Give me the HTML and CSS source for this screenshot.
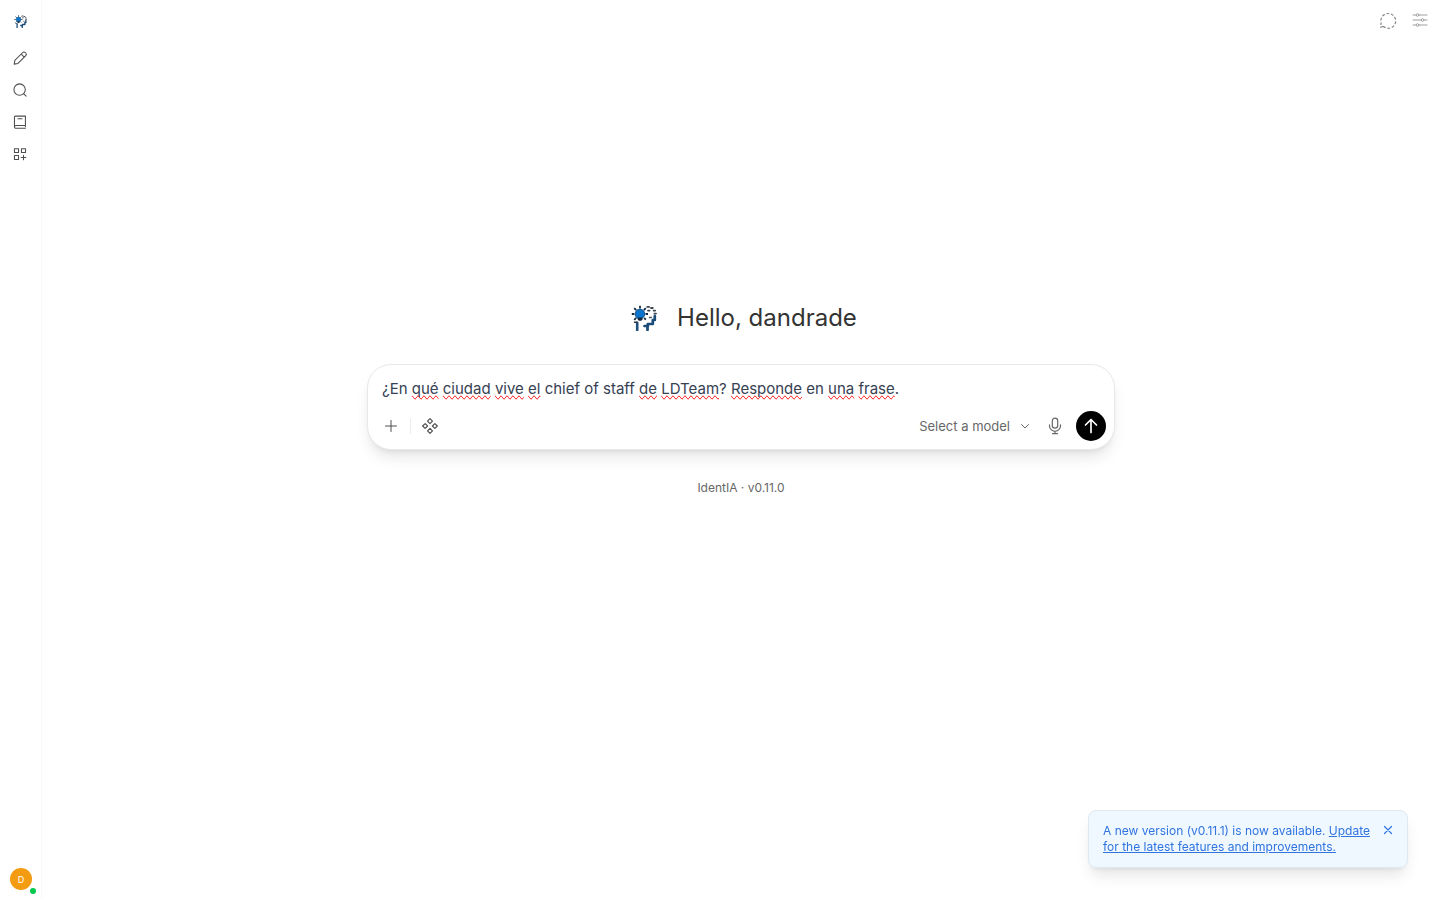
FILE: index.html
```html
<!DOCTYPE html>
<html lang="en">
<head>
<meta charset="utf-8">
<meta name="viewport" content="width=device-width, initial-scale=1">
<title>IdentIA</title>
<link rel="stylesheet" href="styles.css">
</head>
<body>
<svg class="defs" aria-hidden="true">
  <symbol id="logo" viewBox="0 0 26 26">
    <g stroke="#12283f" stroke-width="1.8" fill="none" stroke-linecap="butt">
      <path d="M9 .8v2.600M3.200 3.200l2 2M14.800 3.200l-2 2M.8 9h2.600M14.600 9h2.400M3.200 14.800l2-2M13.200 13l1.600 1.600"/>
    </g>
    <circle cx="9" cy="9" r="4.800" fill="#0b74cc" stroke="#12508a" stroke-width="1"/>
    <path d="M6.800 12.600h4.600v2l-1 1.200H7.800l-1-1.200z" fill="#12283f"/>
    <path d="M6.200 17.800v7.200" stroke="#1d4f7c" stroke-width="2.600"/>
    <path d="M3.500 17.200h2.500" stroke="#26323f" stroke-width="1.400"/>
    <path d="M16.300 1.900h1.800M20 3h1.800M22.600 5.600h1.600M17 5.600h1.600M23.400 8.600h1.600" stroke="#3a4550" stroke-width="1.800"/>
    <path d="M23.800 11v4h-2v4h-5v2.500M13.500 21h3v4" fill="none" stroke="#1b4b78" stroke-width="2.700"/>
    <path d="M18.500 12.500h2" stroke="#4a5560" stroke-width="1.400"/>
  </symbol>
</svg>
<div class="app">
  <nav class="sidebar" aria-label="Main">
    <div class="side-top">
      <button class="side-btn side-logo" aria-label="Open sidebar"><svg class="logo-small"><use href="#logo"/></svg></button>
      <button class="side-btn" aria-label="New chat"><svg class="icon" viewBox="0 0 24 24"><path d="M2 22.500l1.200-6.500L16.200 3a3.300 3.300 0 0 1 5.300 5.300L8.500 21.300zM14 5.200l5.300 5.300"/></svg></button>
      <button class="side-btn" aria-label="Search"><svg class="icon" viewBox="0 0 24 24"><circle cx="11.300" cy="11.300" r="9.800"/><path d="m18.500 18.500 4 4"/></svg></button>
      <button class="side-btn" aria-label="Notes"><svg class="icon" viewBox="0 0 24 24"><path d="M2.500 20V3.500a1.600 1.600 0 0 1 1.600-1.600h17.200V18H5a2.500 2.500 0 0 0-2.500 2.300Zm0 0A2.600 2.600 0 0 0 5.100 22.800h16.200M21.300 18v2M8.500 6.500h7"/></svg></button>
      <button class="side-btn" aria-label="Workspace"><svg class="icon" viewBox="0 0 24 24"><path d="M2.500 3H9.500v6.500H2.500zM14.500 3h7v6.500h-7zM2.500 14.500h7v7h-7zM18 14v8M14 18h8"/></svg></button>
    </div>
    <button class="avatar" aria-label="User menu">D<span class="online"></span></button>
  </nav>
  <main class="main">
    <header class="topbar">
      <button class="top-btn" aria-label="Temporary chat"><svg class="top-icon dashed" viewBox="0 0 16 16"><path d="M3.200 14.300a7.400 7.400 0 1 0-2.100-3.500L.7 15.200z"/></svg></button>
      <button class="top-btn" aria-label="Controls"><svg class="top-icon" viewBox="0 0 16 16"><path d="M1 3h3m3 0h8M1 8h8m3 0h3M1 13h3m3 0h8"/><circle cx="5.500" cy="3" r="1.300"/><circle cx="10.500" cy="8" r="1.300"/><circle cx="5.500" cy="13" r="1.300"/></svg></button>
    </header>
    <section class="hero">
      <div class="greeting">
        <svg class="logo-large"><use href="#logo"/></svg>
        <h1>Hello, dandrade</h1>
      </div>
      <form class="composer">
        <div class="prompt" contenteditable="true" role="textbox" aria-label="Message" spellcheck="false">¿En <span class="sp">qué</span> <span class="sp">ciudad</span> <span class="sp">vive</span> <span class="sp">el</span> chief of staff <span class="sp">de</span> <span class="sp">LDTeam</span>? <span class="sp">Responde</span> en <span class="sp">una</span> <span class="sp">frase</span>.</div>
        <div class="tools">
          <button type="button" class="tool" aria-label="Add"><svg class="plus" viewBox="0 0 12 12"><path d="M6 .5v11M.5 6h11"/></svg></button>
          <span class="divider"></span>
          <button type="button" class="tool" aria-label="Integrations"><svg class="component" viewBox="0 0 24 24"><path d="m12 1 3.700 3.700L12 8.400 8.300 4.700zM12 15.600l3.700 3.700L12 23l-3.700-3.700zM4.700 8.300 8.400 12l-3.700 3.700L1 12zM19.300 8.300 23 12l-3.700 3.700-3.700-3.700z"/></svg></button>
          <button type="button" class="model">Select a model<svg class="chevron" viewBox="0 0 12 12"><path d="m2.500 4.500 3.500 3.500 3.500-3.500"/></svg></button>
          <button type="button" class="tool mic" aria-label="Dictate"><svg class="mic-icon" viewBox="0 0 18 18"><rect x="6.300" y="1.200" width="5.400" height="10" rx="2.700"/><path d="M3.500 7.800v1a5.500 5.500 0 0 0 11 0v-1M9 14.300v2.300M6.500 16.600h5"/></svg></button>
          <button type="submit" class="send" aria-label="Send message"><svg viewBox="0 0 16 16"><path d="M8 14.500v-13M2.500 7 8 1.500 13.500 7"/></svg></button>
        </div>
      </form>
      <p class="version">IdentIA · v0.11.0</p>
    </section>
  </main>
</div>
<aside class="toast" role="status">
  <p>A new version (v0.11.1) is now available. <a href="#">Update for the latest features and improvements.</a></p>
  <button class="close" aria-label="Dismiss"><svg viewBox="0 0 10 10"><path d="m1.500 1.500 7 7m0-7-7 7"/></svg></button>
</aside>
</body>
</html>
```
FILE: styles.css
```css
* { box-sizing: border-box; }
body {
  margin: 0;
  font-family: Inter, "Liberation Sans", sans-serif;
  color: #333;
  background: #fff;
}
button {
  display: flex;
  align-items: center;
  justify-content: center;
  padding: 0;
  border: 0;
  background: none;
  color: inherit;
  font: inherit;
  cursor: pointer;
}
svg {
  display: block;
  fill: none;
  stroke: currentColor;
  stroke-linecap: round;
  stroke-linejoin: round;
}
.defs { position: absolute; width: 0; height: 0; }
#logo { stroke: none; }
.app { display: flex; min-height: 100vh; }
.sidebar {
  display: flex;
  flex-direction: column;
  justify-content: space-between;
  width: 42px;
  padding: 5px 4px 10px;
  border-right: 1px solid #f9f9f9;
}
.side-btn { width: 32px; height: 32px; color: #4e4e4e; }
.side-logo { margin-bottom: 5px; }
.logo-small { width: 13px; height: 13px; }
.icon { width: 14px; height: 14px; stroke-width: 1.8; }
.avatar {
  position: relative;
  width: 22px;
  height: 22px;
  margin: 0 0 0 6px;
  border-radius: 50%;
  background: #f39c12;
  color: #fff;
  font-size: 9px;
}
.online {
  position: absolute;
  right: -4px;
  bottom: -4px;
  width: 6px;
  height: 6px;
  border-radius: 50%;
  background: #00c950;
}
.main { display: flex; flex: 1; flex-direction: column; }
.topbar {
  display: flex;
  justify-content: flex-end;
  padding: 4px 4px 0 0;
}
.top-btn { width: 32px; height: 32px; color: #a0a0a0; }
.top-icon { width: 16px; height: 16px; stroke-width: 1; overflow: visible; }
.dashed {
  color: #888;
  stroke-width: 1.2;
  stroke-linecap: butt;
  stroke-dasharray: 2.8 1.8;
}
.hero {
  display: flex;
  flex: 1;
  flex-direction: column;
  align-items: center;
  justify-content: center;
  padding: 0 24px 138px;
}
.greeting {
  display: flex;
  align-items: center;
  gap: 20px;
  margin-bottom: 30px;
  padding-left: 6px;
}
.logo-large { width: 26px; height: 26px; }
h1 { margin: 0; font-size: 24px; font-weight: 400; line-height: 32px; }
.composer {
  width: 100%;
  max-width: 748px;
  padding: 12px 8px 8px 14px;
  border: 1px solid #e8e8e8;
  border-radius: 24px;
  background: #fff;
  box-shadow: 0 10px 15px -3px rgb(0 0 0 / 10%), 0 4px 6px -4px rgb(0 0 0 / 10%);
}
.prompt {
  color: #364153;
  font-size: 15px;
  line-height: 24px;
  outline: none;
}
.sp { text-decoration-line: spelling-error; }
.tools {
  display: flex;
  align-items: center;
  margin-top: 10px;
  color: #4e4e4e;
}
.tool { width: 18px; height: 30px; }
.plus { width: 12px; height: 12px; stroke-width: 1; }
.divider { width: 1px; height: 16px; margin: 0 10px; background: #ececec; }
.component { width: 16px; height: 16px; stroke-width: 1.7; }
.model {
  gap: 9px;
  margin-left: auto;
  color: #676767;
  font-size: 13px;
}
.chevron { width: 12px; height: 12px; }
.mic { margin: 0 12px 0 15px; color: #676767; }
.mic-icon { width: 18px; height: 18px; stroke-width: 1.2; }
.send {
  width: 30px;
  height: 30px;
  border-radius: 50%;
  background: #000;
  color: #fff;
}
.send svg { width: 16px; height: 16px; stroke-width: 1.7; }
.version {
  margin: 30px 0 0;
  color: #676767;
  font-size: 12px;
  line-height: 16px;
}
.toast {
  position: fixed;
  right: 32px;
  bottom: 32px;
  display: flex;
  align-items: flex-start;
  justify-content: space-between;
  width: 320px;
  padding: 12px 14px;
  border: 1px solid #dfe7ef;
  border-radius: 8px;
  background: #f0f8ff;
  color: #3074e0;
  box-shadow: 0 10px 15px -3px rgb(0 0 0 / 10%), 0 4px 6px -4px rgb(0 0 0 / 10%);
  font-size: 12px;
  line-height: 16px;
}
.toast p { width: 272px; margin: 0; }
.toast a { color: inherit; }
.close { height: 14px; }
.close svg { width: 10px; height: 10px; stroke-width: 1.2; }
```
